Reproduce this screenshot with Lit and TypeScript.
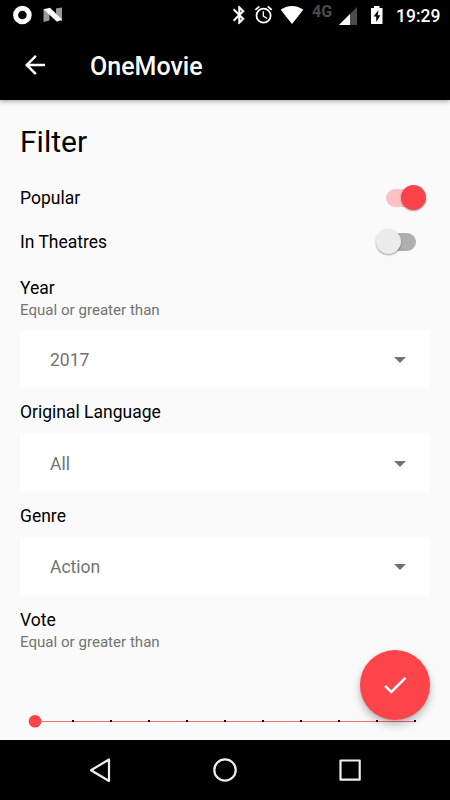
import { LitElement, html, css, svg } from "lit";
import { customElement, property } from "lit/decorators.js";

@customElement("status-bar")
class StatusBar extends LitElement {
  static styles = css`
    :host {
      display: flex;
      height: 30px;
      background: #000;
      color: #fff;
      font: 500 17.5px/30px Roboto, sans-serif;
    }
    svg { display: block; flex: none; height: 30px; fill: #fff; }
    .left { width: 75px; }
    .spacer { flex: 1; }
    .net { width: 23px; margin-left: 6px; font-size: 16px; line-height: 23px; color: #4c4c4c; font-weight: 700; }
    .time { width: 44px; margin-right: 10px; padding-top: 2px; line-height: 28px; text-align: right; white-space: nowrap; }
  `;
  render() {
    return html`
      <svg class="left" width="75" viewBox="0 0 75 30">
        <circle cx="22.4" cy="15" r="6.800" fill="none" stroke="#fff" stroke-width="5" />
        <path d="M43.500 9l6 4v7.500l-6 1.500z M56 17V8.500l6-1v14z" fill="#999" />
        <path d="M43.500 9.300L50 7.800 62 19.500 57 21.800z" />
      </svg>
      <div class="spacer"></div>
      <svg width="22" viewBox="228 0 22 30">
        <path transform="translate(228.500 4.200) scale(.9)" stroke="#fff" stroke-width=".4" d="M17.710 7.710L12 2h-1v7.590L6.410 5 5 6.410 10.590 12 5 17.590 6.410 19 11 14.410V22h1l5.710-5.710-4.300-4.290zM13 5.830l1.880 1.880L13 9.590zM14.880 16.290L13 18.170v-3.760z" fill-rule="evenodd" />
      </svg>
      <svg width="25" viewBox="250 0 25 30">
        <path transform="translate(253 4.200) scale(.88)" d="M22 5.720l-4.600-3.860-1.290 1.530 4.600 3.860zM7.880 3.390L6.600 1.860 2 5.710l1.290 1.530zM12.500 8H11v6l4.750 2.850.75-1.230-4-2.370zM12 4a9 9 0 1 0 0 18 9 9 0 0 0 0-18zm0 16a7 7 0 1 1 0-14 7 7 0 0 1 0 14z" />
      </svg>
      <svg width="31" viewBox="275 0 31 30">
        <path d="M292 24L280.700 9.800Q285.500 6 292 6T303.300 9.800z" />
      </svg>
      <div class="net">4G</div>
      <svg width="26" viewBox="335 0 26 30">
        <path d="M357 7v18H339z" fill="#4c4c4c" />
        <path d="M350 14v11H339z" />
      </svg>
      <svg width="35" viewBox="361 0 35 30">
        <path fill-rule="evenodd" d="M371 8h3V6h5.500v2h3v16H371zM378.500 10l-5 6.500h2.700V22l4.300-6.700h-2.800z" />
      </svg>
      <div class="time">19:29</div>
    `;
  }
}

@customElement("toggle-row")
class ToggleRow extends LitElement {
  @property() label = "";
  @property({ type: Boolean, reflect: true }) on = false;
  static styles = css`
    :host { display: flex; align-items: center; justify-content: space-between; height: 44px; }
    .label { line-height: 20px; }
    .switch { display: flex; align-items: center; width: 30px; height: 18px; margin: 0 14px 1px 0; border-radius: 9px; background: #afafaf; }
    .thumb { flex: none; width: 25px; height: 25px; margin-left: -10px; border-radius: 50%; background: #ececec; box-shadow: 0 1px 2px rgba(0, 0, 0, 0.38); }
    :host([on]) .switch { background: #fdc1c4; }
    :host([on]) .thumb { margin-left: 14.500px; background: #f94249; }
  `;
  render() {
    return html`<span class="label">${this.label}</span><span class="switch"><span class="thumb"></span></span>`;
  }
}

@customElement("select-field")
class SelectField extends LitElement {
  @property() label = "";
  @property() hint = "";
  @property() value = "";
  static styles = css`
    :host { display: block; }
    .label { line-height: 20px; height: 20px; }
    .hint { font-size: 15.100px; line-height: 20px; height: 20px; margin-top: 2px; color: #737373; }
    .box { display: flex; align-items: center; justify-content: space-between; height: 58.750px; margin-top: 11px; padding: 0 24px 0 30px; box-sizing: border-box; background: #fff; color: #737373; }
    .hint + .box { margin-top: 9.500px; }
    .value { padding-top: 2px; }
    svg { display: block; margin-top: 2px; fill: #737373; }
  `;
  render() {
    return html`
      <div class="label">${this.label}</div>
      ${this.hint ? html`<div class="hint">${this.hint}</div>` : ""}
      <div class="box">
        <span class="value">${this.value}</span>
        <svg width="12" height="6" viewBox="0 0 12 6"><path d="M0 0h12L6 6z" /></svg>
      </div>
    `;
  }
}

@customElement("app-root")
class AppRoot extends LitElement {
  static styles = css`
    :host { display: flex; flex-direction: column; position: relative; width: 450px; height: 800px; overflow: hidden; background: #fafafa; color: #000; font: 400 17.5px/20px Roboto, sans-serif; }
    .toolbar { display: flex; align-items: center; flex: none; height: 70px; padding-left: 20px; gap: 40px; background: #000; color: #fff; box-shadow: 0 1px 5px rgba(0, 0, 0, 0.4); }
    .toolbar svg { fill: #fff; }
    .title { font-size: 25px; line-height: 30px; font-weight: 500; padding-top: 3px; }
    .content { flex: 1; min-height: 0; padding: 22px 20px 0; }
    h1 { margin: 0 0 14px; font-size: 30px; line-height: 40px; font-weight: 400; }
    .fields { display: flex; flex-direction: column; gap: 14px; margin-top: 14px; }
    .hint { font-size: 15.100px; line-height: 20px; color: #737373; margin-top: 2px; }
    .slider { display: block; margin-top: 59.250px; }
    .fab { position: absolute; left: 360px; top: 650px; width: 70px; height: 70px; border-radius: 50%; display: flex; align-items: center; justify-content: center; background: #fd444b; box-shadow: 0 5px 9px rgba(0, 0, 0, 0.24), 0 1px 3px rgba(0, 0, 0, 0.12); }
    .fab svg { fill: #fff; }
    .nav { flex: none; height: 60px; background: #000; }
    .nav svg { display: block; }
  `;
  render() {
    return html`
      <status-bar></status-bar>
      <div class="toolbar">
        <svg width="30" height="30" viewBox="0 0 24 24"><path d="M20 11H7.830l5.590-5.590L12 4l-8 8 8 8 1.410-1.410L7.830 13H20z" /></svg>
        <div class="title">OneMovie</div>
      </div>
      <div class="content">
        <h1>Filter</h1>
        <toggle-row label="Popular" on></toggle-row>
        <toggle-row label="In Theatres"></toggle-row>
        <div class="fields">
          <select-field label="Year" hint="Equal or greater than" value="2017"></select-field>
          <select-field label="Original Language" value="All"></select-field>
          <select-field label="Genre" value="Action"></select-field>
          <div>
            <div>Vote</div>
            <div class="hint">Equal or greater than</div>
          </div>
        </div>
        <svg class="slider" width="410" height="20" viewBox="0 0 410 20">
          <rect x="15" y="10" width="380" height="1" fill="#fa6a70" />
          ${Array.from({ length: 10 }, (_, i) => svg`<rect x=${52 + i * 38} y="9" width="2" height="2" />`)}
          <circle cx="15" cy="10.200" r="6.300" fill="#fd444b" />
        </svg>
      </div>
      <div class="nav">
        <svg width="450" height="60" viewBox="0 0 450 60" fill="none" stroke="#eee" stroke-width="2.200" stroke-linejoin="round">
          <path d="M109 19.500v21.500L91 30.200z" />
          <circle cx="225" cy="30" r="10.700" />
          <rect x="340.500" y="20.500" width="19.200" height="19.200" />
        </svg>
      </div>
      <div class="fab">
        <svg width="30" height="30" viewBox="0 0 24 24"><path d="M9 16.170L4.830 12l-1.420 1.410L9 19 21 7l-1.410-1.410z" /></svg>
      </div>
    `;
  }
}
